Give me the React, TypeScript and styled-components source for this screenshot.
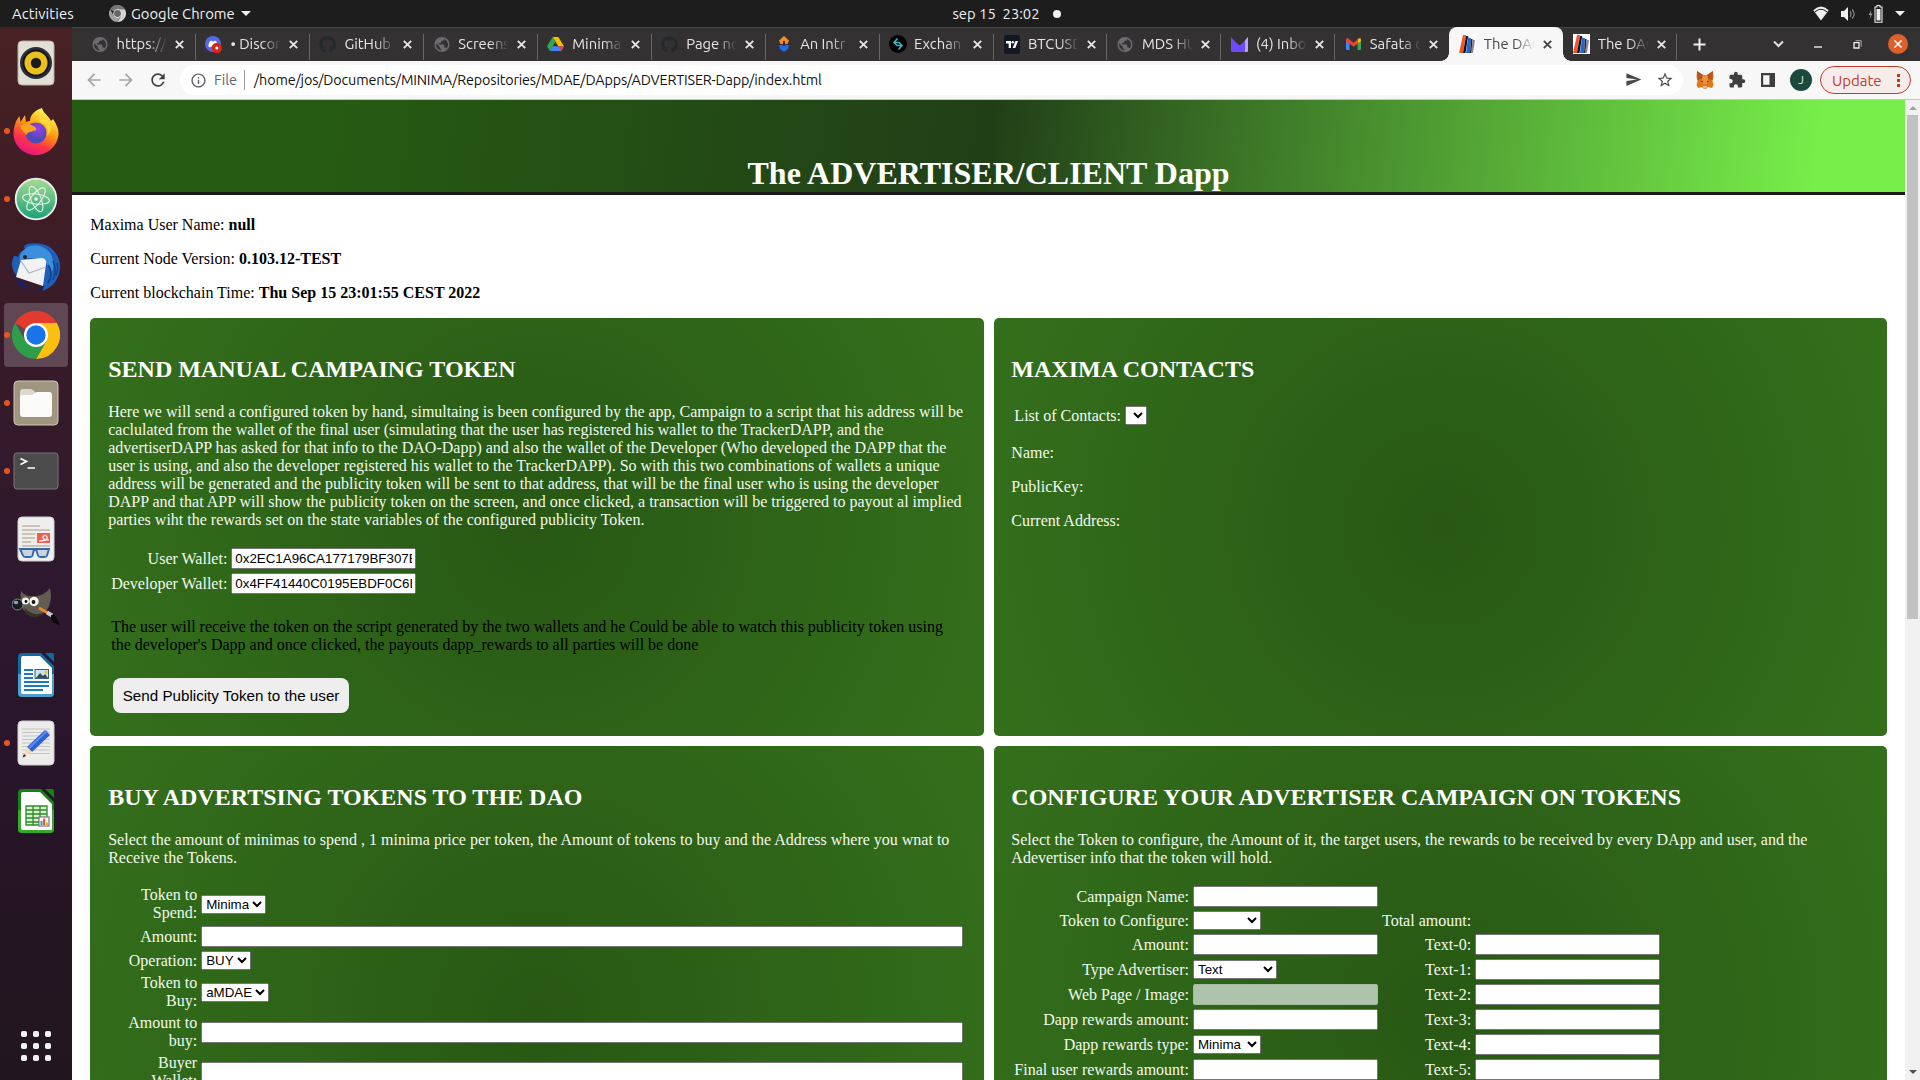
import React from "react";
import styled, { createGlobalStyle, css } from "styled-components";
import { FaGithub } from "react-icons/fa";
import { MdExtension, MdStarBorder, MdSend, MdRefresh, MdArrowBack, MdArrowForward, MdInfoOutline, MdPublic } from "react-icons/md";

const UI_FONT = `Ubuntu, "Noto Sans", "Open Sans", sans-serif`;

const GlobalStyle = createGlobalStyle`
  html, body { margin: 0; padding: 0; background: #fff; overflow: hidden; }
  * { box-sizing: border-box; }
`;

const Desktop = styled.div`
  width: 1920px;
  height: 1080px;
  display: flex;
  flex-direction: column;
  overflow: hidden;
  font-family: ${UI_FONT};
`;

/* ---------- GNOME top bar ---------- */

const TopBar = styled.header`
  height: 27px;
  flex: none;
  display: grid;
  grid-template-columns: 1fr auto 1fr;
  align-items: center;
  background: #1d1d1d;
  color: #f0f0f0;
  font-size: 14.8px;
  line-height: 27px;
  white-space: pre;
`;

const TopLeft = styled.div`
  display: flex;
  align-items: center;
  padding-left: 12px;
  gap: 5px;
`;

const Activities = styled.span`
  width: 92px;
  letter-spacing: 0.1px;
`;

const AppName = styled.span`
  margin-right: 1px;
`;

const Clock = styled.div`
  display: flex;
  align-items: center;
  gap: 13px;
  padding-left: 93px;
`;

const Dot = styled.i`
  width: 8px;
  height: 8px;
  border-radius: 50%;
  background: #f0f0f0;
`;

const Triangle = styled.i`
  border: 5px solid transparent;
  border-top-color: #f0f0f0;
  border-bottom: 0;
`;

const TopRight = styled.div`
  display: flex;
  align-items: center;
  justify-content: flex-end;
  gap: 12px;
  padding-right: 15px;
`;

/* ---------- Dock ---------- */

const Workspace = styled.div`
  flex: 1;
  min-height: 0;
  display: flex;
`;

const Dock = styled.nav`
  width: 72px;
  flex: none;
  display: flex;
  flex-direction: column;
  padding-top: 2px;
  background: linear-gradient(180deg, #482123 0%, #3a1b28 25%, #2f192e 50%, #28152a 70%, #21161d 100%);
`;

const DockItem = styled.div<{ $running?: boolean; $last?: boolean }>`
  position: relative;
  height: 68px;
  flex: none;
  display: flex;
  align-items: center;
  justify-content: center;
  ${(p) => p.$last && "margin-top: auto;"}
  ${(p) =>
    p.$running &&
    css`
      &::before {
        content: "";
        position: absolute;
        left: 4px;
        top: 31px;
        width: 6px;
        height: 6px;
        border-radius: 50%;
        background: #e95420;
      }
    `}
`;

const DockTile = styled.div<{ $active?: boolean }>`
  width: 64px;
  height: 64px;
  border-radius: 4px;
  display: flex;
  align-items: center;
  justify-content: center;
  background: ${(p) => (p.$active ? "rgba(255,255,255,0.2)" : "transparent")};
`;

/* ---------- Browser ---------- */

const Browser = styled.main`
  flex: 1;
  min-width: 0;
  display: flex;
  flex-direction: column;
`;

const TabStrip = styled.div`
  height: 34px;
  flex: none;
  display: flex;
  align-items: stretch;
  padding-left: 10px;
  background: #343132;
  box-shadow: inset 0 1px #454344;
`;

const Tab = styled.div<{ $active?: boolean; $divider?: boolean }>`
  position: relative;
  width: 113.95px;
  flex: none;
  display: flex;
  align-items: center;
  padding: 0 11.5px 0 9px;
  color: ${(p) => (p.$active ? "#444746" : "#e6e6e6")};
  ${(p) =>
    p.$active &&
    css`
      background: #f7f7f7;
      border-radius: 8px 8px 0 0;
      &::before,
      &::after {
        content: "";
        position: absolute;
        bottom: 0;
        width: 8px;
        height: 8px;
      }
      &::before {
        left: -8px;
        background: radial-gradient(circle at 0 0, transparent 7.5px, #f7f7f7 8px);
      }
      &::after {
        right: -8px;
        background: radial-gradient(circle at 100% 0, transparent 7.5px, #f7f7f7 8px);
      }
    `}
  ${(p) =>
    p.$divider &&
    css`
      &::after {
        content: "";
        position: absolute;
        right: 0;
        top: 7px;
        width: 1px;
        height: 26px;
        background: #686667;
      }
    `}
`;

const Favicon = styled.span`
  width: 18px;
  flex: none;
  display: flex;
  justify-content: center;
  margin-right: 7.5px;
`;

const TabTitle = styled.span`
  flex: 1;
  min-width: 0;
  white-space: pre;
  font-size: 14.8px;
  line-height: 20px;
  mask-image: linear-gradient(90deg, #000 60%, transparent 98%);
`;

const CloseMark = styled.svg`
  flex: none;
  margin-left: 7px;
  stroke: currentColor;
  stroke-width: 1.9;
`;

const WindowTools = styled.div`
  flex: 1;
  display: grid;
  grid-template-columns: 45px 36px 40px 39px 40px 41px;
  align-items: center;
  justify-items: center;
  svg:nth-child(2) { grid-column: 3; }
`;

const Toolbar = styled.div`
  height: 39px;
  flex: none;
  display: flex;
  align-items: center;
  background: #f7f7f7;
  border-bottom: 1px solid #c4c4c4;
`;

const NavButtons = styled.div`
  display: flex;
  gap: 12px;
  padding-left: 12px;
  width: 108px;
  color: #a6a6a6;
  svg { width: 20px; height: 20px; flex: none; }
  svg:last-child { color: #3f3f3f; }
`;

const Omnibox = styled.div`
  width: 1503px;
  height: 30px;
  flex: none;
  display: flex;
  align-items: center;
  padding: 0 9px 0 10px;
  border-radius: 15px;
  background: #fff;
  color: #5f6368;
  font-size: 14.5px;
  line-height: 20px;
`;

const Scheme = styled.span`
  margin-left: 7px;
  padding-right: 7px;
  margin-right: 9px;
  border-right: 1px solid #9b9b9b;
`;

const Url = styled.span`
  flex: 1;
  color: #111;
  font-size: 14.4px;
  letter-spacing: -0.17px;
`;

const OmniActions = styled.div`
  display: flex;
  gap: 14px;
  color: #4a4a4a;
`;

const Extensions = styled.div`
  flex: 1;
  display: flex;
  align-items: center;
  gap: 14px;
  padding-left: 13px;
  color: #3f3f3f;
  svg { flex: none; }
`;

const Avatar = styled.span`
  width: 22px;
  height: 22px;
  flex: none;
  border-radius: 50%;
  background: #1b493f;
  color: #dfe9e6;
  font-size: 12px;
  line-height: 22px;
  text-align: center;
`;

const UpdatePill = styled.button`
  width: 91px;
  height: 28px;
  flex: none;
  margin-left: -6px;
  padding: 0 10px 0 11px;
  display: flex;
  align-items: center;
  justify-content: space-between;
  border: 1px solid #c5392a;
  border-radius: 14px;
  background: #f6edeb;
  color: #c5392a;
  font: 15px ${UI_FONT};
`;

const PillDots = styled.i`
  width: 3px;
  height: 15px;
  background: radial-gradient(circle, #c5392a 1.5px, transparent 1.9px) 0 0 / 3px 5px;
`;

const Viewport = styled.div`
  flex: 1;
  min-height: 0;
  display: flex;
`;

const Scrollbar = styled.div`
  width: 15px;
  flex: none;
  display: flex;
  flex-direction: column;
  align-items: center;
  background: #f1f1f1;
`;

const ScrollArrow = styled.i<{ $down?: boolean }>`
  width: 0;
  height: 0;
  border: 4px solid transparent;
  ${(p) =>
    p.$down
      ? "border-top: 4px solid #505050; border-bottom: 0; margin: auto 0 6px;"
      : "border-bottom: 4px solid #a3a3a3; border-top: 0; margin: 6px 0 5px;"}
`;

const ScrollThumb = styled.div`
  width: 11px;
  height: 504px;
  background: #c1c1c1;
`;

/* ---------- Page ---------- */

const Page = styled.div`
  flex: 1;
  min-width: 0;
  overflow: hidden;
  background: #fff;
  color: #000;
  font-family: "Liberation Serif", serif;
  font-size: 16px;
  line-height: 18px;
`;

const Banner = styled.div`
  height: 95px;
  display: flex;
  align-items: flex-end;
  justify-content: center;
  border-bottom: 3px solid #1a1a1a;
  background: linear-gradient(97deg, #265b13 0%, #265b13 14%, #213f17 50%, #77ee4a 95%);
`;

const Title = styled.h1`
  margin: 0;
  color: #fff;
  font-size: 32px;
  line-height: 37px;
`;

const Body = styled.div`
  padding: 4.7px 18.33px 0;
`;

const Text = styled.p`
  margin: 16px 0;
`;

const Grid = styled.div`
  display: grid;
  grid-template-columns: 1fr 1fr;
  grid-template-rows: 418px 540px;
  gap: 10px;
`;

const Panel = styled.section`
  padding: 18.87px 17.87px 17.87px;
  border-radius: 5px;
  color: #f2f8ee;
  background: radial-gradient(circle, #285814 0%, #34701c 100%);
`;

const Heading = styled.h2`
  margin: 19.92px 0;
  color: #fff;
  font-size: 24px;
  line-height: 27px;
`;

const Table = styled.table<{ $full?: boolean }>`
  border-spacing: 2px;
  width: ${(p) => (p.$full ? "100%" : "auto")};
  table-layout: ${(p) => (p.$full ? "fixed" : "auto")};
`;

const Label = styled.td<{ $width?: number }>`
  padding: 1px;
  text-align: right;
  ${(p) => p.$width && `width: ${p.$width}px;`}
`;

const Cell = styled.td`
  padding: 1px;
`;

const Field = styled.input<{ $wide?: boolean }>`
  width: ${(p) => (p.$wide ? "100%" : "185px")};
  height: 21px;
  font: 13.333px "Liberation Sans", sans-serif;
  &:disabled {
    background: #aec3ac;
    border: 1px solid #a3b9a0;
    border-radius: 2px;
  }
`;

const Choice = styled.select<{ $width: number }>`
  width: ${(p) => p.$width}px;
  height: 19px;
  font: 13.333px "Liberation Sans", sans-serif;
`;

const Note = styled.p`
  margin: 19px 3px 24px;
  padding-top: 2px;
  color: #000;
`;

const SendButton = styled.button`
  height: 35px;
  margin: 0 0 0 5px;
  padding: 0 9.5px;
  border: 0;
  border-radius: 8px;
  background: #eee;
  color: #000;
  font: 15.2px "Liberation Sans", sans-serif;
`;

/* ---------- Favicons ---------- */

const Globe = () => <MdPublic size={19} color="#6a6c70" />;

const Discord = () => (
  <svg width="18" height="20" viewBox="0 0 18 20">
    <circle cx="8" cy="10" r="8" fill="#5468ea" />
    <path d="M3.4 12.6c.2-2.6.8-4.3 1.5-5.3l1.8-.7.6.8h1.5l.6-.8 1.8.7c.8 1.2 1.4 3 1.5 5.3l-1.9 1-.7-1H5.9l-.7 1z" fill="#fff" />
    <circle cx="11.8" cy="14" r="5.2" fill="#d5281b" />
    <circle cx="11.8" cy="14" r="1.5" fill="#fff" />
  </svg>
);

const Drive = () => (
  <svg width="17" height="16" viewBox="0 0 24 22">
    <path d="M8 1h8l8 13h-8z" fill="#fbbc04" />
    <path d="M8 1 0 14l4 7 8-13.5z" fill="#34a853" />
    <path d="M8 14h16l-4 7H4z" fill="#4285f4" />
    <path d="m16 14 8 0-4 7z" fill="#ea4335" />
  </svg>
);

const ClickUp = () => (
  <svg width="12" height="16" viewBox="0 0 12 16">
    <path d="M6 0 11 4.500 9.500 8H2.500L1 4.500z" fill="#f5892b" />
    <path d="M1 9h10L10 13 6 16 2 13z" fill="#246bf0" />
    <path d="M6 5v5" stroke="#343132" strokeWidth="2" />
  </svg>
);

const Exchange = () => (
  <svg width="18" height="18" viewBox="0 0 18 18">
    <circle cx="9" cy="9" r="9" fill="#000" />
    <path d="M8.500 3.500 5 7.500l3 3h4M9.500 14.500 13 10.500 10 7.500H6" fill="none" stroke="#3fb0c0" strokeWidth="1.6" />
  </svg>
);

const TradingView = () => (
  <svg width="16" height="19" viewBox="0 0 16 19">
    <rect width="16" height="19" rx="2" fill="#131722" />
    <path d="M2 6h5v7H4.700V8.500H2z" fill="#fff" />
    <circle cx="8.800" cy="7.300" r="1.300" fill="#fff" />
    <path d="M11.500 6H14l-2.700 7H8.700z" fill="#fff" />
  </svg>
);

const ProtonMail = () => (
  <svg width="17" height="15" viewBox="0 0 17 15">
    <path d="M0 0v13.500Q0 15 1.500 15h14Q17 15 17 13.500V0l-5 5.500-3.500 3L5 5.500z" fill="#6d4aff" />
    <path d="M17 0v13.500Q17 15 15.500 15H14V3.500z" fill="#b9a6ff" />
  </svg>
);

const Gmail = () => (
  <svg width="15" height="12" viewBox="0 0 15 12">
    <path d="M0 2v9q0 1 1 1h2.500V5z" fill="#4285f4" />
    <path d="M15 2v9q0 1-1 1h-2.500V5z" fill="#34a853" />
    <path d="M11.500 1.500 13.200.300Q15-.400 15 1.800V3l-3.500 2.800z" fill="#fbbc04" />
    <path d="M0 3V1.800Q0-.500 1.800.300L7.500 4.700 11.500 1.500v4.300l-4 3L0 3z" fill="#ea4335" />
  </svg>
);

const Dao = () => (
  <svg width="17" height="20" viewBox="0 0 17 20">
    <rect width="17" height="20" fill="#fff" />
    <path d="M4 1h3L4 19H0z" fill="#f0572c" />
    <path d="M7 2h2.200L6.500 19H4z" fill="#111" />
    <path d="m9 3.500 3 .8L11 19H7z" fill="#2167d8" />
    <path d="M12 5h1.500L12.500 19H11z" fill="#222" />
    <path d="m13.500 5.500 2.500.7-2 12.800h-1.800z" fill="#84889a" />
  </svg>
);

const Hub = () => <FaGithub size={17} color="#24292e" />;

type TabInfo = { title: string; icon: React.FC; active?: boolean; noDivider?: boolean };

const TABS: TabInfo[] = [
  { title: "https://", icon: Globe },
  { title: "• Discor", icon: Discord },
  { title: "GitHub", icon: Hub },
  { title: "Screens", icon: Globe },
  { title: "Minima", icon: Drive },
  { title: "Page no", icon: Hub },
  { title: "An Intr", icon: ClickUp },
  { title: "Exchan", icon: Exchange },
  { title: "BTCUSD", icon: TradingView },
  { title: "MDS HU", icon: Globe },
  { title: "(4) Inbo", icon: ProtonMail },
  { title: "Safata d", icon: Gmail, noDivider: true },
  { title: "The DAO", icon: Dao, active: true },
  { title: "The DAO", icon: Dao },
];

/* ---------- Dock icons ---------- */

const Rhythmbox = () => (
  <svg width="38" height="46" viewBox="0 0 38 46">
    <rect x="1" y="1" width="36" height="44" rx="4" fill="#e3dfd4" stroke="#b6aea2" />
    <circle cx="19" cy="23" r="16" fill="#2c2f3a" />
    <circle cx="19" cy="23" r="13.500" fill="#14151c" />
    <circle cx="19" cy="23" r="11.500" fill="#ecc01c" />
    <circle cx="19" cy="23" r="5.200" fill="#1b1b1b" />
  </svg>
);

const Firefox = () => (
  <svg width="46" height="47" viewBox="0 0 46 47">
    <defs>
      <linearGradient id="ffBody" x1="0.8" y1="0" x2="0.3" y2="1">
        <stop offset="0.1" stopColor="#fff44f" />
        <stop offset="0.45" stopColor="#ff980e" />
        <stop offset="0.72" stopColor="#ff3647" />
        <stop offset="1" stopColor="#e31587" />
      </linearGradient>
      <radialGradient id="ffGlobe" cx="0.6" cy="0.3">
        <stop offset="0" stopColor="#9b3df0" />
        <stop offset="1" stopColor="#4e4ab8" />
      </radialGradient>
    </defs>
    <path d="M29 0c1 5 7 8 9 13l2-2c4 6 6 11 5.500 16C44 39 34 47 23 47S1 39 .500 26C.300 19 3 12 6.500 8l1 6L12 7l1 7c2-1 3-1 4-1 0-6 5-11 12-13z" fill="url(#ffBody)" />
    <circle cx="23" cy="25" r="10.500" fill="url(#ffGlobe)" />
    <path d="M7 18c5-3 12-2 15 1 2 2 2 3-1 4-4 1-7 1-7 4-3-2-5-5-7-9z" fill="#ffa31a" />
    <path d="M27 14c6 1 9 7 7 14 4-4 5-9 2-14l-7-9c-2 3-3 6-2 9z" fill="#ffd83a" />
  </svg>
);

const Atom = () => (
  <svg width="44" height="44" viewBox="0 0 44 44">
    <defs>
      <linearGradient id="atomBg" x1="0" y1="0" x2="0" y2="1">
        <stop offset="0" stopColor="#a6dc93" />
        <stop offset="1" stopColor="#1ba077" />
      </linearGradient>
    </defs>
    <circle cx="22" cy="22" r="20.300" fill="url(#atomBg)" stroke="#eef1ee" strokeWidth="1.800" />
    <g fill="none" stroke="#e4f6e8" strokeWidth="1.100">
      <ellipse cx="22" cy="22" rx="13.500" ry="5" transform="rotate(8 22 22)" />
      <ellipse cx="22" cy="22" rx="13.500" ry="5" transform="rotate(68 22 22)" />
      <ellipse cx="22" cy="22" rx="13.500" ry="5" transform="rotate(128 22 22)" />
    </g>
    <circle cx="22" cy="22" r="1.700" fill="#fff" />
  </svg>
);

const Thunderbird = () => (
  <svg width="48" height="48" viewBox="0 0 48 48">
    <path d="M12 3C18-1 28 0 36 3c8 5 12 12 12 21 0 12-8 21-18 24 2-3 2-5 1-7L6 34C2 30 0 26 0 21c0-3 1-6 2-8 2 0 3 0 4 1 1-4 3-6 7-7z" fill="#1f5fb8" />
    <path d="M13 6c6-6 20-4 25 4 4 6 4 14 2 20C36 20 30 15 20 15c-4 0-8 0-12 3-1-5 1-9 5-12z" fill="#3b8fdc" />
    <path d="M36 22c4 5 4 12 0 18M41 18c3 6 3 12 0 19M45 20c1 4 1 8-1 12" fill="none" stroke="#123f8c" strokeWidth="1.400" />
    <path d="m9 17 21-2q5 1 4 6l-3 22L4 34z" fill="#f2f2f4" />
    <path d="m9 18 8 12 17-6" fill="none" stroke="#b0b3b8" strokeWidth="1.200" />
    <path d="M4 36c2 6 7 10 13 11l-4-7zM25 46l7-3-2 4z" fill="#1c1f63" />
    <circle cx="13" cy="14" r="2" fill="#222" />
  </svg>
);

const ChromeLogo = ({ size = 48, gray = false }: { size?: number; gray?: boolean }) => (
  <svg width={size} height={size} viewBox="0 0 48 48">
    <path d="M24 24 3.200 12A24 24 0 0 1 44.800 12z" fill={gray ? "#777" : "#e23b2e"} />
    <path d="M24 12h20.800A24 24 0 0 1 24 48l10.400-18z" fill={gray ? "#d2d2d2" : "#fcc110"} />
    <path d="M34.400 30 24 48A24 24 0 0 1 3.200 12l10.400 18z" fill={gray ? "#a0a0a0" : "#2f9e4b"} />
    <path d="M24 12h20.800A24 24 0 0 0 3.200 12l10.400 6z" fill={gray ? "#777" : "#e23b2e"} />
    <circle cx="24" cy="24" r="12" fill={gray ? "#eee" : "#fff"} />
    <circle cx="24" cy="24" r="9.700" fill={gray ? "#666" : "#1a73e8"} />
  </svg>
);

const Files = () => (
  <svg width="46" height="46" viewBox="0 0 46 46">
    <rect x="1" y="1" width="44" height="44" rx="4" fill="#a0957f" stroke="#cfc8b8" />
    <path d="M7 12q0-3 3-3h7q2 0 3 1l2 2v6H7z" fill="#ddd8cc" />
    <path d="M7 17q0-2 2-2h9q2 0 3-1.500t3-1.500h12q3 0 3 3v19q0 3-3 3H10q-3 0-3-3z" fill="#fafaf9" />
  </svg>
);

const Terminal = () => (
  <svg width="46" height="38" viewBox="0 0 46 38">
    <rect x="1" y="1" width="44" height="36" rx="3" fill="#4b4b4b" stroke="#777" />
    <path d="m7.500 6.500 6 3-6 3M14.500 16H22" fill="none" stroke="#fff" strokeWidth="1.700" />
  </svg>
);

const DocReader = () => (
  <svg width="38" height="46" viewBox="0 0 38 46">
    <rect x="1" y="1" width="36" height="44" rx="4" fill="#eeeeec" stroke="#cfcfcd" />
    <path d="M5 10h18M5 14h28M5 18h13M5 22h13M5 26h9M5 30h28" stroke="#bdb6a4" strokeWidth="1.600" />
    <rect x="20" y="17" width="13" height="10" fill="#f15d4f" />
    <path d="M22 25c5 0 9-1 8-4s-5-1-4 1 3 2 6 2" fill="none" stroke="#fff" strokeWidth="1.200" />
    <g fill="rgba(190,200,215,0.7)" stroke="#3567ad" strokeWidth="1.900">
      <path d="M3 33h14l-1.500 6.500q-.5 1.500-2.500 1.500H8.500q-2 0-2.500-1.500zM19 33h13l-2 6.500q-.5 1.500-2.500 1.500h-4q-2 0-2.500-1.500z" />
      <path d="M17 34h3" />
    </g>
  </svg>
);

const Gimp = () => (
  <svg width="48" height="40" viewBox="0 0 48 40">
    <path d="M9 4c4 5 10 6 15 5 6 0 11-4 14-8 2 9 1 17-4 23-5 5-14 6-20 1C9 22 8 15 9 4z" fill="#625d50" />
    <path d="M12 20c6 8 16 9 22 4-4 7-14 8-20 3z" fill="#37332c" />
    <ellipse cx="5.500" cy="17.500" rx="5.500" ry="5.500" fill="#161b1d" stroke="#7b8a8f" strokeWidth="1" />
    <ellipse cx="4" cy="15.500" rx="2.300" ry="1.800" fill="#8da4aa" />
    <circle cx="13.500" cy="14" r="3.600" fill="#f1f1ee" />
    <circle cx="14" cy="14.500" r="1.400" fill="#111" />
    <circle cx="22" cy="14.500" r="4.700" fill="#f4f4f1" />
    <circle cx="21.500" cy="15" r="1.900" fill="#111" />
    <path d="m27 21 9 5" stroke="#e78b28" strokeWidth="2.600" />
    <path d="m35 25.500 5 3" stroke="#c9ccd0" strokeWidth="4" />
    <path d="m39 28 4 0 5 10c-5-1-9-3-9-8z" fill="#0c0c0c" />
  </svg>
);

const OfficeDoc = ({ color, light, children }: { color: string; light: string; children: React.ReactNode }) => (
  <svg width="38" height="46" viewBox="0 0 38 46">
    <path d="M5 1h19l13 13v27q0 4-4 4H5q-4 0-4-4V5q0-4 4-4z" fill={color} />
    <path d="M1 22h36v19q0 4-4 4H5q-4 0-4-4z" fill={light} />
    <path d="M6 4h17l12 12v25q0 1-1 1H6q-2 0-2-2V6q0-2 2-2z" fill="#fff" />
    <path d="M28 1h7q2 0 2 2v7z" fill={color} />
    {children}
  </svg>
);

const Writer = () => (
  <OfficeDoc color="#12699f" light="#4d9ecb">
    <path d="M7 18h9M7 22h9M7 26h9M7 30h25M7 34h25M7 38h19" stroke="#197cb8" strokeWidth="1.800" />
    <rect x="18" y="17.500" width="13.500" height="9" fill="#c7e3f5" stroke="#36637f" />
    <path d="m19 26 4-5 3 3 2-2 3 4z" fill="#3f4a50" />
    <circle cx="29" cy="20" r="1.500" fill="#f5c211" />
  </OfficeDoc>
);

const Calc = () => (
  <OfficeDoc color="#178017" light="#37a82b">
    <path d="M9 18h21v19H9z" fill="#d9f3d2" stroke="#2f8a27" strokeWidth="1.300" />
    <path d="M9 22h21M9 26h21M9 30h21M9 34h21M16 18v19M23 18v19" stroke="#2f8a27" strokeWidth="1.300" />
    <rect x="22" y="29" width="10" height="9" fill="#fff" stroke="#777" strokeWidth="1.200" />
    <path d="M24.500 37v-4" stroke="#2b90d9" strokeWidth="2" />
    <path d="M27.200 37v-6.500" stroke="#e05a1c" strokeWidth="2.200" />
    <path d="M30 37v-2.500" stroke="#e9b21a" strokeWidth="2" />
  </OfficeDoc>
);

const TextEditor = () => (
  <svg width="38" height="46" viewBox="0 0 38 46">
    <rect x="1" y="1" width="36" height="44" rx="4" fill="#ececea" stroke="#cfcfcd" />
    <path d="M5 9h28M5 12.500h28M5 16h28M5 19.500h28M5 23h28M5 26.500h28M5 30h28M5 33.500h28" stroke="#c4c4c2" />
    <path d="m10 27 18-17 5 5-18 17z" fill="#2f62d8" />
    <path d="m12 28 18-17" stroke="#5e8af0" strokeWidth="2" />
    <path d="m10 27 5 5-9 5z" fill="#f3d9b1" />
    <path d="m7 34 2 2-3.500 1.500z" fill="#222" />
  </svg>
);

const AppGrid = () => (
  <svg width="32" height="32" viewBox="0 0 32 32" fill="#f0f0f0">
    {[1, 13, 25].map((y) => [1, 13, 25].map((x) => <rect key={`${x}-${y}`} x={x} y={y} width="6" height="6" rx="1.800" />))}
  </svg>
);

const DOCK: { icon: React.FC; running?: boolean; active?: boolean }[] = [
  { icon: Rhythmbox },
  { icon: Firefox, running: true },
  { icon: Atom, running: true },
  { icon: Thunderbird },
  { icon: () => <ChromeLogo />, running: true, active: true },
  { icon: Files, running: true },
  { icon: Terminal, running: true },
  { icon: DocReader },
  { icon: Gimp },
  { icon: Writer },
  { icon: TextEditor, running: true },
  { icon: Calc },
];

/* ---------- Status and extension icons ---------- */

const Wifi = () => (
  <svg width="16" height="15" viewBox="0 0 16 15">
    <path d="M.300 4.200Q8-3 15.700 4.200L8 14.500z" fill="#f0f0f0" />
    <path d="M2 5.800Q8 .800 14 5.800" fill="none" stroke="#1d1d1d" strokeWidth="1.100" />
  </svg>
);

const Volume = () => (
  <svg width="15" height="14" viewBox="0 0 15 14">
    <path d="M0 4h3l4-4v14l-4-4H0z" fill="#f0f0f0" />
    <path d="M9 4.200q2 2.800 0 5.600M11.200 2.500q4 4.500 0 9" fill="none" stroke="#8a8a8a" strokeWidth="1.200" />
  </svg>
);

const Battery = () => (
  <svg width="15" height="18" viewBox="0 0 15 18">
    <path d="M3.500 5 .500 10H2.500L1.500 14 4.500 8.500H2.700z" fill="#9a9a9a" />
    <path d="M7 2h2V.500h3V2h2v15.300H7z" fill="none" stroke="#f0f0f0" strokeWidth="1.100" />
    <rect x="8.500" y="4" width="4" height="11.500" fill="#f0f0f0" />
  </svg>
);

const MetaMask = () => (
  <svg width="18" height="18" viewBox="0 0 18 18">
    <path d="M1 0 7 4h4l6-4 .500 6-1 4 1 4-1.500 3-4-1-2 2H8l-2-2-4 1-1.500-3 1-4-1-4z" fill="#e2761b" />
    <path d="m1 0 6 4-1 4-4.500 1zM17 0l-6 4 1 4 4.500 1z" fill="#b5561a" />
    <path d="m6 8 1-4h4l1 4-1 5H7z" fill="#f0903a" />
    <path d="M4.500 9.500 7 10.500 6.500 11.500zM13.500 9.500 11 10.500l.500 1z" fill="#2b2b2b" />
    <path d="M7 15h4l-.500 2.500h-3z" fill="#d7c1b3" />
  </svg>
);

const SidePanel = () => (
  <svg width="16" height="14" viewBox="-1 0 16 14">
    <path d="M0 0h14v14H0zM2.200 2.200v9.600h6.300V2.200z" fill="#3f3f3f" fillRule="evenodd" />
  </svg>
);

const TabClose = () => (
  <CloseMark width="9" height="9" viewBox="0 0 9 9">
    <path d="m.800.800 7.400 7.400M8.200.800.800 8.200" />
  </CloseMark>
);

/* ---------- Panels ---------- */

const ManualPanel = () => (
  <Panel>
    <Heading>SEND MANUAL CAMPAING TOKEN</Heading>
    <Text>
      Here we will send a configured token by hand, simultaing is been configured by the app, Campaign to a script that his
      address will be caclulated from the wallet of the final user (simulating that the user has registered his wallet to the
      TrackerDAPP, and the advertiserDAPP has asked for that info to the DAO-Dapp) and also the wallet of the Developer (Who
      developed the DAPP that the user is using, and also the developer registered his wallet to the TrackerDAPP). So with
      this two combinations of wallets a unique address will be generated and the publicity token will be sent to that
      address, that will be the final user who is using the developer DAPP and that APP will show the publicity token on the
      screen, and once clicked, a transaction will be triggered to payout al implied parties wiht the rewards set on the
      state variables of the configured publicity Token.
    </Text>
    <Table>
      <tbody>
        <tr>
          <Label>User Wallet:</Label>
          <Cell><Field defaultValue="0x2EC1A96CA177179BF307E" /></Cell>
        </tr>
        <tr>
          <Label>Developer Wallet:</Label>
          <Cell><Field defaultValue="0x4FF41440C0195EBDF0C6E" /></Cell>
        </tr>
      </tbody>
    </Table>
    <Note>
      The user will receive the token on the script generated by the two wallets and he Could be able to watch this publicity
      token using the developer's Dapp and once clicked, the payouts dapp_rewards to all parties will be done
    </Note>
    <SendButton>Send Publicity Token to the user</SendButton>
  </Panel>
);

const ContactsPanel = () => (
  <Panel>
    <Heading>MAXIMA CONTACTS</Heading>
    <Table>
      <tbody>
        <tr>
          <Label>List of Contacts:</Label>
          <Cell><Choice $width={22} /></Cell>
        </tr>
      </tbody>
    </Table>
    <Text>Name:</Text>
    <Text>PublicKey:</Text>
    <Text>Current Address:</Text>
  </Panel>
);

type BuyRow = { label: string; option?: string; width?: number };

const BUY_ROWS: BuyRow[] = [
  { label: "Token to Spend:", option: "Minima", width: 65 },
  { label: "Amount:" },
  { label: "Operation:", option: "BUY", width: 50 },
  { label: "Token to Buy:", option: "aMDAE", width: 68 },
  { label: "Amount to buy:" },
  { label: "Buyer Wallet:" },
];

const BuyPanel = () => (
  <Panel>
    <Heading>BUY ADVERTSING TOKENS TO THE DAO</Heading>
    <Text>
      Select the amount of minimas to spend , 1 minima price per token, the Amount of tokens to buy and the Address where you
      wnat to Receive the Tokens.
    </Text>
    <Table $full>
      <tbody>
        {BUY_ROWS.map((row) => (
          <tr key={row.label}>
            <Label $width={88}>{row.label}</Label>
            <Cell>
              {row.option ? (
                <Choice $width={row.width ?? 60}><option>{row.option}</option></Choice>
              ) : (
                <Field $wide />
              )}
            </Cell>
          </tr>
        ))}
      </tbody>
    </Table>
  </Panel>
);

type ConfigRow = { label: string; select?: { text: string; width: number }; disabled?: boolean; side?: string };

const CONFIG_ROWS: ConfigRow[] = [
  { label: "Campaign Name:" },
  { label: "Token to Configure:", select: { text: "", width: 68 }, side: "Total amount:" },
  { label: "Amount:", side: "Text-0:" },
  { label: "Type Advertiser:", select: { text: "Text", width: 84 }, side: "Text-1:" },
  { label: "Web Page / Image:", disabled: true, side: "Text-2:" },
  { label: "Dapp rewards amount:", side: "Text-3:" },
  { label: "Dapp rewards type:", select: { text: "Minima", width: 68 }, side: "Text-4:" },
  { label: "Final user rewards amount:", side: "Text-5:" },
];

const ConfigPanel = () => (
  <Panel>
    <Heading>CONFIGURE YOUR ADVERTISER CAMPAIGN ON TOKENS</Heading>
    <Text>
      Select the Token to configure, the Amount of it, the target users, the rewards to be received by every DApp and user,
      and the Adevertiser info that the token will hold.
    </Text>
    <Table>
      <tbody>
        {CONFIG_ROWS.map((row) => (
          <tr key={row.label}>
            <Label>{row.label}</Label>
            <Cell>
              {row.select ? (
                <Choice $width={row.select.width}><option>{row.select.text}</option></Choice>
              ) : (
                <Field disabled={row.disabled} />
              )}
            </Cell>
            <Label>{row.side}</Label>
            <Cell>{row.side?.startsWith("Text") && <Field />}</Cell>
          </tr>
        ))}
      </tbody>
    </Table>
  </Panel>
);

export default function App() {
  return (
    <Desktop>
      <GlobalStyle />
      <TopBar>
        <TopLeft>
          <Activities>Activities</Activities>
          <ChromeLogo size={17} gray />
          <AppName>Google Chrome</AppName>
          <Triangle />
        </TopLeft>
        <Clock>
          <span>sep 15  23:02</span>
          <Dot />
        </Clock>
        <TopRight>
          <Wifi />
          <Volume />
          <Battery />
          <Triangle />
        </TopRight>
      </TopBar>

      <Workspace>
        <Dock>
          {DOCK.map(({ icon: Icon, running, active }, i) => (
            <DockItem key={i} $running={running}>
              <DockTile $active={active}><Icon /></DockTile>
            </DockItem>
          ))}
          <DockItem $last><AppGrid /></DockItem>
        </Dock>

        <Browser>
          <TabStrip>
            {TABS.map(({ title, icon: Icon, active, noDivider }, i) => (
              <Tab key={i} $active={active} $divider={!active && !noDivider}>
                <Favicon><Icon /></Favicon>
                <TabTitle>{title}</TabTitle>
                <TabClose />
              </Tab>
            ))}
            <WindowTools>
              <svg width="13" height="13" stroke="#f0f0f0" strokeWidth="2"><path d="M6.500.500v12M.500 6.500h12" /></svg>
              <svg width="11" height="8" fill="none" stroke="#e0e0e0" strokeWidth="2"><path d="m1 1.500 4.500 4.500L10 1.500" /></svg>
              <svg width="8" height="10" stroke="#eee" strokeWidth="1.400"><path d="M0 8h8" /></svg>
              <svg width="9" height="9" fill="none" stroke="#eee" strokeWidth="1.300"><path d="M1 2.700h5v5.300H1z" /><path d="M2.500.700h5.700v6" stroke="#aaa" strokeWidth="1" /></svg>
              <svg width="20" height="20"><circle cx="10" cy="10" r="10" fill="#dd5f2c" /><path d="m6.500 6.500 7 7M13.500 6.500l-7 7" stroke="#fff" strokeWidth="1.500" /></svg>
            </WindowTools>
          </TabStrip>

          <Toolbar>
            <NavButtons><MdArrowBack /><MdArrowForward /><MdRefresh /></NavButtons>
            <Omnibox>
              <MdInfoOutline size={17} />
              <Scheme>File</Scheme>
              <Url>/home/jos/Documents/MINIMA/Repositories/MDAE/DApps/ADVERTISER-Dapp/index.html</Url>
              <OmniActions><MdSend size={17} /><MdStarBorder size={18} /></OmniActions>
            </Omnibox>
            <Extensions>
              <MetaMask />
              <MdExtension size={18} />
              <SidePanel />
              <Avatar>J</Avatar>
              <UpdatePill>Update<PillDots /></UpdatePill>
            </Extensions>
          </Toolbar>

          <Viewport>
            <Page>
              <Banner><Title>The ADVERTISER/CLIENT Dapp</Title></Banner>
              <Body>
                <Text>Maxima User Name: <b>null</b></Text>
                <Text>Current Node Version: <b>0.103.12-TEST</b></Text>
                <Text>Current blockchain Time: <b>Thu Sep 15 23:01:55 CEST 2022</b></Text>
                <Grid>
                  <ManualPanel />
                  <ContactsPanel />
                  <BuyPanel />
                  <ConfigPanel />
                </Grid>
              </Body>
            </Page>
            <Scrollbar>
              <ScrollArrow />
              <ScrollThumb />
              <ScrollArrow $down />
            </Scrollbar>
          </Viewport>
        </Browser>
      </Workspace>
    </Desktop>
  );
}
